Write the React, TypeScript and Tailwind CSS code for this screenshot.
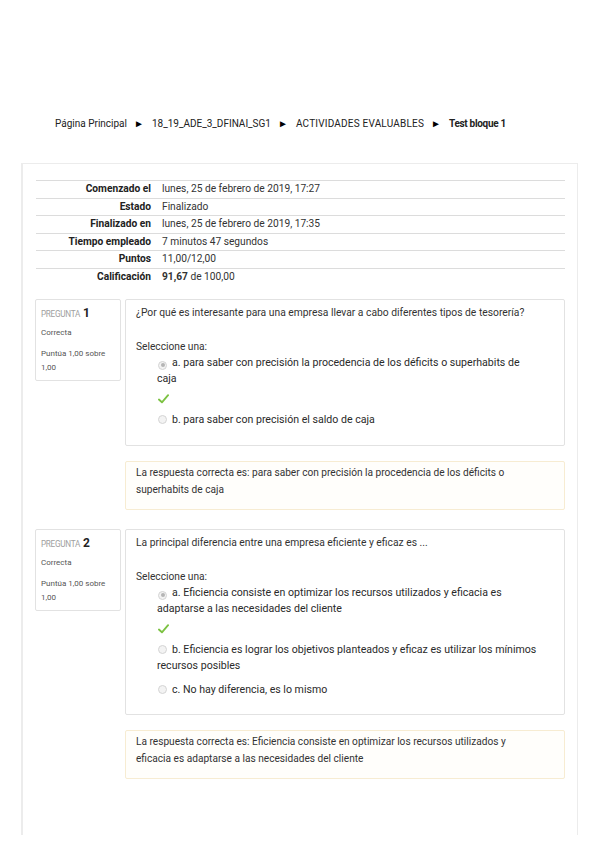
import React from "react";

type Option = { label: string; selected?: boolean; correct?: boolean; gap: string };

type Question = {
  num: number;
  text: string;
  options: Option[];
  answer: string;
  pb: string;
};

const summary: [string, React.ReactNode][] = [
  ["Comenzado el", "lunes, 25 de febrero de 2019, 17:27"],
  ["Estado", "Finalizado"],
  ["Finalizado en", "lunes, 25 de febrero de 2019, 17:35"],
  ["Tiempo empleado", "7 minutos 47 segundos"],
  ["Puntos", "11,00/12,00"],
  [
    "Calificación",
    <>
      <b>91,67</b> de 100,00
    </>,
  ],
];

const questions: Question[] = [
  {
    num: 1,
    text: "¿Por qué es interesante para una empresa llevar a cabo diferentes tipos de tesorería?",
    options: [
      {
        label: "a. para saber con precisión la procedencia de los déficits o superhabits de caja",
        selected: true,
        correct: true,
        gap: "mt-0",
      },
      { label: "b. para saber con precisión el saldo de caja", gap: "mt-[5px]" },
    ],
    answer:
      "La respuesta correcta es: para saber con precisión la procedencia de los déficits o superhabits de caja",
    pb: "pb-[17px]",
  },
  {
    num: 2,
    text: "La principal diferencia entre una empresa eficiente y eficaz es ...",
    options: [
      {
        label:
          "a. Eficiencia consiste en optimizar los recursos utilizados y eficacia es adaptarse a las necesidades del cliente",
        selected: true,
        correct: true,
        gap: "mt-0",
      },
      {
        label:
          "b. Eficiencia es lograr los objetivos planteados y eficaz es utilizar los mínimos recursos posibles",
        gap: "mt-[5px]",
      },
      { label: "c. No hay diferencia, es lo mismo", gap: "mt-[8px]" },
    ],
    answer:
      "La respuesta correcta es: Eficiencia consiste en optimizar los recursos utilizados y eficacia es adaptarse a las necesidades del cliente",
    pb: "pb-[16px]",
  },
];

function Radio({ checked }: { checked?: boolean }) {
  return (
    <span className="relative top-[1px] mr-[5px] ml-[1px] inline-flex h-[9px] w-[9px] items-center justify-center rounded-full border border-[#d4d4d4] bg-[#f3f3f3] align-baseline">
      {checked && <span className="h-[4px] w-[4px] rounded-full bg-[#b5b5b5]" />}
    </span>
  );
}

function Check() {
  return (
    <svg viewBox="0 0 12 12" className="mt-[4px] ml-[1px] h-[16px] w-[11px]">
      <path
        d="M1 6.6 L4.3 9.6 L11 1.8"
        fill="none"
        stroke="#7cc242"
        strokeWidth="2"
        strokeLinecap="round"
        strokeLinejoin="round"
      />
    </svg>
  );
}

function QuestionBlock({ q }: { q: Question }) {
  return (
    <div>
      <div className="flex gap-[4px]">
        <div className="h-[82px] w-[86px] shrink-0 rounded-[2px] border border-[#e2e2e2] px-[5px] pt-[5px] text-[8px] leading-[16px] text-[#555]">
          <div className="flex items-baseline gap-[3px]">
            <span className="text-[8.2px] tracking-[-0.3px] text-[#a0a0a0]">PREGUNTA</span>
            <span className="text-[12px] font-bold text-[#222]">{q.num}</span>
          </div>
          <div className="mt-[3px]">Correcta</div>
          <div className="mt-[6px] leading-[14px]">Puntúa 1,00 sobre 1,00</div>
        </div>
        <div
          className={`flex-1 rounded-[2px] border border-[#e2e2e2] px-[10px] pt-[5px] ${q.pb}`}
        >
          <p className="text-[10.3px]">{q.text}</p>
          <p className="mt-[18px]">Seleccione una:</p>
          <div className="ml-[21px] w-[383px] text-[10.6px] text-[#2a2a2a]">
            {q.options.map((o) => (
              <div key={o.label} className={o.gap}>
                <div>
                  <Radio checked={o.selected} />
                  {o.label}
                </div>
                {o.correct && <Check />}
              </div>
            ))}
          </div>
        </div>
      </div>
      <div className="mt-[15px] ml-[90px] rounded-[2px] border border-[#f7ecd2] bg-[#fffefb] px-[10px] pt-[2px] pb-[11px] leading-[17px]">
        <p className="w-[395px] text-[10.15px]">{q.answer}</p>
      </div>
    </div>
  );
}

export default function App() {
  return (
    <div className="min-h-[848px] bg-white pt-[116px] font-['Roboto',sans-serif] text-[10.2px] leading-[16px] text-[#333]">
      <nav className="flex items-center pl-[55px] text-[10px] text-[#222]">
        <span>Página Principal</span>
        <span className="mr-[8px] ml-[7px] text-[10px] text-black">►</span>
        <span>18_19_ADE_3_DFINAI_SG1</span>
        <span className="mr-[8px] ml-[7px] text-[10px] text-black">►</span>
        <span className="tracking-[0.2px]">ACTIVIDADES EVALUABLES</span>
        <span className="mr-[8px] ml-[7px] text-[10px] text-black">►</span>
        <span className="font-bold tracking-[-0.3px]">Test bloque 1</span>
      </nav>

      <main className="mt-[31px] mr-[21px] ml-[21px] h-[672px] border-t border-r border-l-2 border-[#ececec] px-[12px] pt-[16px]">
        <div className="ml-px">
          {summary.map(([label, value]) => (
            <div key={label} className="flex h-[17.5px] items-center border-t border-[#dcdcdc]">
              <div className="w-[120px] pr-[5px] text-right font-bold text-[#222]">{label}</div>
              <div className="pl-[6px]">{value}</div>
            </div>
          ))}
        </div>

        <div className="mt-[14px] flex flex-col gap-[19px]">
          {questions.map((q) => (
            <QuestionBlock key={q.num} q={q} />
          ))}
        </div>
      </main>
    </div>
  );
}
